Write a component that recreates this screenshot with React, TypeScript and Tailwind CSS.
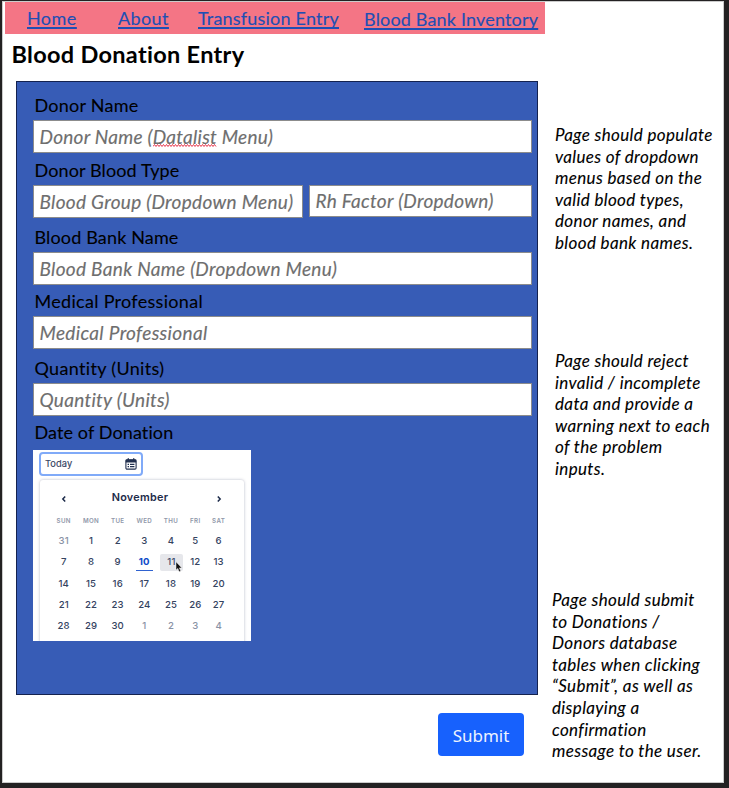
import type { ReactNode } from 'react';

const weekdays = ['SUN', 'MON', 'TUE', 'WED', 'THU', 'FRI', 'SAT'];
const days = [
  31, 1, 2, 3, 4, 5, 6,
  7, 8, 9, 10, 11, 12, 13,
  14, 15, 16, 17, 18, 19, 20,
  21, 22, 23, 24, 25, 26, 27,
  28, 29, 30, 1, 2, 3, 4,
];

const columns = 'grid grid-cols-[27.4px_27.2px_26.2px_27px_26.4px_22.2px_24.6px] justify-items-center';

function Label({ className, children }: { className: string; children: ReactNode }) {
  return (
    <div className={`ml-[17.5px] text-[18px] leading-[30px] text-black whitespace-nowrap [-webkit-text-stroke:0.1px] ${className}`}>
      {children}
    </div>
  );
}

function Input({ className, children }: { className: string; children: ReactNode }) {
  return (
    <div
      className={`border border-[#8c8c8c] bg-white pl-[5.5px] text-[19px] whitespace-nowrap text-[#6e6e6e] italic [-webkit-text-stroke:0.15px] ${className}`}
    >
      {children}
    </div>
  );
}

function Note({ className, lines }: { className: string; lines: string[] }) {
  return (
    <div className={`text-[17px] leading-[21.6px] tracking-[0.36px] whitespace-nowrap text-black italic [-webkit-text-stroke:0.1px] ${className}`}>
      {lines.map((line) => (
        <div key={line}>{line}</div>
      ))}
    </div>
  );
}

function Squiggle() {
  return (
    <svg className="absolute top-[23px] left-0 h-[3px] w-[64px]" viewBox="0 0 64 3">
      <path
        d="M0 2.5L1.5 0.5L3 2.5L4.5 0.5L6 2.5L7.5 0.5L9 2.5L10.5 0.5L12 2.5L13.5 0.5L15 2.5L16.5 0.5L18 2.5L19.5 0.5L21 2.5L22.5 0.5L24 2.5L25.5 0.5L27 2.5L28.5 0.5L30 2.5L31.5 0.5L33 2.5L34.5 0.5L36 2.5L37.5 0.5L39 2.5L40.5 0.5L42 2.5L43.5 0.5L45 2.5L46.5 0.5L48 2.5L49.5 0.5L51 2.5L52.5 0.5L54 2.5L55.5 0.5L57 2.5L58.5 0.5L60 2.5L61.5 0.5L63 2.5"
        fill="none"
        stroke="#e4253c"
        strokeWidth="0.9"
      />
    </svg>
  );
}

function Day({ index, day }: { index: number; day: number }) {
  const outside = index === 0 || index > 30;
  if (index === 10) {
    return (
      <div className="flex h-[17px] w-[17px] items-center justify-center border-b border-[#2f62d0] pt-px font-bold text-[#0c49c8]">
        {day}
      </div>
    );
  }
  if (index === 11) {
    return (
      <div className="relative left-[0.5px] flex h-[17px] w-[23px] items-center justify-center rounded-[2px] bg-[#e6e7eb] text-[#42506e]">
        {day}
        <svg className="absolute top-[7px] left-[15px]" width="8" height="12" viewBox="0 0 8 12">
          <path d="M1 0.8V9L2.8 7.4L4.2 10.8L5.8 10.1L4.4 6.9H6.9Z" fill="#111" stroke="#f4f4f4" strokeWidth="0.5" />
        </svg>
      </div>
    );
  }
  return (
    <div className={`flex h-[17px] items-center justify-center ${outside ? 'text-[#8992a5]' : 'text-[#34435f]'}`}>
      {day}
    </div>
  );
}

function DatePicker() {
  return (
    <div className="ml-4 mt-[3px] h-[191px] w-[218px] overflow-hidden bg-white pt-[2px] pl-[6px] font-['Inter',sans-serif]">
      <div className="flex h-6 w-[104px] items-center justify-between rounded-[4px] border-2 border-[#80aaf8] pr-[4.5px] pl-[4px] text-[9.3px] tracking-[0.1px] text-[#34435f] [-webkit-text-stroke:0.15px]">
        Today
        <svg width="12" height="12" viewBox="0 0 12 12">
          <rect x="0.9" y="1.7" width="10.2" height="9.4" rx="1.2" fill="none" stroke="#22304f" strokeWidth="1.1" />
          <path d="M0.8 1.6H11.2V4.4H0.8ZM2.6 0.3H4V2H2.6ZM8 0.3H9.4V2H8Z" fill="#22304f" />
          <path d="M2.6 6.3H4M5 6.3H9.4M2.6 8.6H4M5 8.6H9.4" stroke="#22304f" strokeWidth="1.2" />
        </svg>
      </div>
      <div className="mt-1 ml-px h-[176px] w-[204px] rounded-[3px] bg-white pl-[10px] shadow-[0_0_3px_rgba(40,50,90,0.35)]">
        <div className="flex h-9 items-center pt-px">
          <svg className="ml-[11px]" width="6" height="8" viewBox="0 0 6 8">
            <path d="M4.2 1.4L1.8 4L4.2 6.6" fill="none" stroke="#1d2b4a" strokeWidth="1.5" />
          </svg>
          <div className="w-[149px] pr-[3px] text-center text-[10.8px] font-semibold tracking-[0.3px] text-[#1d2b4a]">
            November
          </div>
          <svg width="6" height="8" viewBox="0 0 6 8">
            <path d="M1.8 1.4L4.2 4L1.8 6.6" fill="none" stroke="#1d2b4a" strokeWidth="1.5" />
          </svg>
        </div>
        <div className={`${columns} h-[9px] text-[6.2px] leading-[9px] font-semibold tracking-[0.35px] text-[#8f97a9]`}>
          {weekdays.map((name) => (
            <span key={name}>{name}</span>
          ))}
        </div>
        <div className={`${columns} mt-[7.5px] gap-y-[4.2px] text-[9.6px] leading-none font-medium tracking-[0.1px]`}>
          {days.map((day, index) => (
            <Day key={index} index={index} day={day} />
          ))}
        </div>
      </div>
    </div>
  );
}

export default function App() {
  return (
    <div className="h-[788px] w-[729px] overflow-hidden bg-[#232122] pt-px pl-[2px] font-['Lato',sans-serif]">
      <div className="flex h-[782px] w-[722px] border border-[#cbcbcb] bg-white">
        <main className="w-[542px] shrink-0">
          <nav className="ml-[2px] flex h-8 w-[540px] bg-[#f47585] text-[18px] leading-8 whitespace-nowrap text-[#1e4fb4] underline decoration-[1.5px] underline-offset-2 [-webkit-text-stroke:0.15px] [text-decoration-skip-ink:none]">
            <a className="ml-[22px] w-[91px] tracking-[0.4px]">Home</a>
            <a className="w-[80px] tracking-[0.37px]">About</a>
            <a className="w-[166px] tracking-[0.2px]">Transfusion Entry</a>
            <a className="pt-px tracking-[0.17px]">Blood Bank Inventory</a>
          </nav>
          <h1 className="mt-1 ml-[8.5px] text-[23.5px] leading-8 font-bold tracking-[0.3px] text-black">
            Blood Donation Entry
          </h1>
          <section className="mt-[11px] ml-[13px] flex h-[614px] w-[522px] flex-col border border-[#14224f] bg-[#375cb6]">
            <Label className="mt-2 tracking-[0.25px]">Donor Name</Label>
            <Input className="ml-4 h-[33px] w-[499px] leading-[31px] tracking-[0.26px]">
              Donor Name (
              <span className="relative inline-block">
                Datalist
                <Squiggle />
              </span>{' '}
              Menu)
            </Input>
            <Label className="mt-[2px] tracking-[0.12px]">Donor Blood Type</Label>
            <div className="ml-4 flex h-[33px] gap-[6px]">
              <Input className="h-[33px] w-[270px] leading-[31px] tracking-[0.31px]">Blood Group (Dropdown Menu)</Input>
              <Input className="h-8 w-[223px] leading-[29px] tracking-[0.29px]">Rh Factor (Dropdown)</Input>
            </div>
            <Label className="mt-1 tracking-[0.15px]">Blood Bank Name</Label>
            <Input className="ml-4 h-[33px] w-[499px] leading-[31px] tracking-[0.31px]">Blood Bank Name (Dropdown Menu)</Input>
            <Label className="mt-px tracking-[0.3px]">Medical Professional</Label>
            <Input className="ml-4 h-[33px] w-[499px] leading-[31px] tracking-[0.34px]">Medical Professional</Input>
            <Label className="mt-1 tracking-[0.33px]">Quantity (Units)</Label>
            <Input className="ml-4 h-[33px] w-[499px] leading-[31px] tracking-[0.28px]">Quantity (Units)</Input>
            <Label className="mt-px tracking-[0.11px]">Date of Donation</Label>
            <DatePicker />
          </section>
          <button className="mt-[18px] ml-[435px] block h-[43px] w-[86px] rounded-[4px] bg-[#1761fd] pt-[3px] font-['Noto_Sans',sans-serif] text-[17px] text-[#eef3ff]">
            Submit
          </button>
        </main>
        <aside className="pt-[122px] pl-[10px]">
          <Note
            className="h-[226px]"
            lines={['Page should populate', 'values of dropdown', 'menus based on the', 'valid blood types,', 'donor names, and', 'blood bank names.']}
          />
          <Note
            className="h-[239px]"
            lines={['Page should reject', 'invalid / incomplete', 'data and provide a', 'warning next to each', 'of the problem', 'inputs.']}
          />
          <Note
            className="-ml-[3px]"
            lines={['Page should submit', 'to Donations /', 'Donors database', 'tables when clicking', '“Submit”, as well as', 'displaying a', 'confirmation', 'message to the user.']}
          />
        </aside>
      </div>
    </div>
  );
}
